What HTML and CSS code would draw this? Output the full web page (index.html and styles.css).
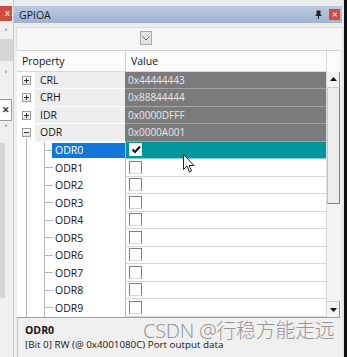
FILE: index.html
```html
<!DOCTYPE html>
<html lang="en">
<head>
    <meta charset="UTF-8">
    <meta name="viewport" content="width=device-width, initial-scale=1.0">
    <title>GPIOA</title>
    <link rel="stylesheet" href="styles.css">
</head>
<body>
    <div class="app">
        <!-- left docked strip -->
        <div class="strip">
            <div class="strip-close">x</div>
            <div class="strip-up">&#708;</div>
            <div class="strip-block"></div>
            <div class="strip-down">&#709;</div>
            <div class="strip-x">&#10005;</div>
            <div class="strip-up small">&#708;</div>
            <div class="strip-bar"></div>
        </div>

        <div class="panel">
            <div class="title-gap"></div>
            <div class="titlebar">
                <span class="title">GPIOA</span>
                <span class="title-btns">
                    <svg class="pin" width="7" height="9" viewBox="0 0 7 9"><path d="M1.5 0.5h4v4.5h1v1h-2.5v3h-1v-3h-2.5v-1h1z" fill="#222"/></svg>
                    <span class="close">&#10005;</span>
                </span>
            </div>

            <div class="toolbar">
                <div class="toolbar-box">
                    <span class="drop-btn">
                        <svg width="8" height="5" viewBox="0 0 8 5"><path d="M0.5 0.5l3.5 3.5 3.5-3.5" fill="none" stroke="#666" stroke-width="1"/></svg>
                    </span>
                </div>
            </div>

            <div class="grid">
                <div class="grid-main">
                    <div class="grid-head">
                        <div class="name">Property</div>
                        <div class="val">Value</div>
                    </div>

                    <div class="row top">
                        <div class="name"><span class="exp plus"></span><span class="lbl">CRL</span></div>
                        <div class="val">0x44444443</div>
                    </div>
                    <div class="row top">
                        <div class="name"><span class="exp plus"></span><span class="lbl">CRH</span></div>
                        <div class="val">0x88844444</div>
                    </div>
                    <div class="row top">
                        <div class="name"><span class="exp plus"></span><span class="lbl">IDR</span></div>
                        <div class="val">0x0000DFFF</div>
                    </div>
                    <div class="row top open">
                        <div class="name"><span class="exp"></span><span class="lbl">ODR</span></div>
                        <div class="val">0x0000A001</div>
                    </div>

                    <div class="row child selected">
                        <div class="name"><span class="lbl">ODR0</span></div>
                        <div class="val"><span class="chk on">
                            <svg width="10" height="9" viewBox="0 0 10 9"><path d="M1.5 4.5l2.5 2.5 5-5.5" fill="none" stroke="#111" stroke-width="2"/></svg>
                        </span></div>
                    </div>
                    <div class="row child"><div class="name"><span class="lbl">ODR1</span></div><div class="val"><span class="chk"></span></div></div>
                    <div class="row child"><div class="name"><span class="lbl">ODR2</span></div><div class="val"><span class="chk"></span></div></div>
                    <div class="row child"><div class="name"><span class="lbl">ODR3</span></div><div class="val"><span class="chk"></span></div></div>
                    <div class="row child"><div class="name"><span class="lbl">ODR4</span></div><div class="val"><span class="chk"></span></div></div>
                    <div class="row child"><div class="name"><span class="lbl">ODR5</span></div><div class="val"><span class="chk"></span></div></div>
                    <div class="row child"><div class="name"><span class="lbl">ODR6</span></div><div class="val"><span class="chk"></span></div></div>
                    <div class="row child"><div class="name"><span class="lbl">ODR7</span></div><div class="val"><span class="chk"></span></div></div>
                    <div class="row child"><div class="name"><span class="lbl">ODR8</span></div><div class="val"><span class="chk"></span></div></div>
                    <div class="row child"><div class="name"><span class="lbl">ODR9</span></div><div class="val"><span class="chk"></span></div></div>
                </div>

                <div class="scrollbar">
                    <div class="sb-head"></div>
                    <div class="sb-btn">
                        <svg width="7" height="4" viewBox="0 0 7 4"><path d="M0 4h7l-3.5-4z" fill="#111"/></svg>
                    </div>
                    <div class="sb-thumb"></div>
                    <div class="sb-track"></div>
                    <div class="sb-btn down">
                        <svg width="7" height="4" viewBox="0 0 7 4"><path d="M0 0h7l-3.5 4z" fill="#111"/></svg>
                    </div>
                </div>
            </div>

            <div class="desc">
                <div class="desc-title">ODR0</div>
                <div class="desc-text">[Bit 0] RW (@ 0x4001080C) Port output data</div>
                <div class="watermark">CSDN @行稳方能走远</div>
            </div>
        </div>

        <div class="edge"></div>
    </div>

    <!-- mouse pointer over the selected value -->
    <svg class="cursor" width="12" height="19" viewBox="0 0 12 19">
        <path d="M0.5 0.5v15l3.5-3.5 2.5 6 2-1-2.5-5.5h5z" fill="#fff" stroke="#222" stroke-width="1"/>
    </svg>
</body>
</html>
```

FILE: styles.css
```css
* {
    margin: 0;
    padding: 0;
    box-sizing: border-box;
}

body {
    width: 347px;
    height: 357px;
    overflow: hidden;
    background-color: #f0f0f0;
    font-family: 'Open Sans', 'Noto Sans', sans-serif;
    font-size: 10.5px;
    color: #141414;
    position: relative;
}

.app {
    display: flex;
    height: 357px;
}

/* left docked strip */
.strip {
    width: 14px;
    flex-shrink: 0;
    background-color: #f0f0f0;
    border-right: 1px solid #c9c9c9;
    display: flex;
    flex-direction: column;
    align-items: flex-start;
    padding-top: 6px;
    color: #333;
}

.strip-close {
    width: 12px;
    height: 15px;
    background-color: #cf4b3f;
    color: #f3c6c0;
    font-size: 9px;
    font-weight: bold;
    line-height: 14px;
    text-align: right;
    padding-right: 2px;
}

.strip-up,
.strip-down {
    height: 14px;
    width: 12px;
    font-size: 10px;
    line-height: 16px;
    text-align: center;
    margin-top: 4px;
}

.strip-block {
    width: 13px;
    height: 22px;
    background-color: #d5d5d5;
}

.strip-down {
    margin-top: 6px;
    margin-bottom: 18px;
}

.strip-x {
    width: 12px;
    height: 22px;
    background-color: #fff;
    border: 1px solid #9a9a9a;
    border-left: none;
    font-size: 9px;
    font-weight: bold;
    line-height: 20px;
    text-align: center;
}

.strip-up.small {
    margin-top: 0;
    height: 12px;
}

.strip-bar {
    width: 5px;
    height: 155px;
    margin-top: 10px;
    background-color: #d6d6d6;
}

/* main panel */
.panel {
    width: 328px;
    flex-shrink: 0;
    display: flex;
    flex-direction: column;
    position: relative;
}

.title-gap {
    height: 6px;
    background-color: #ececec;
}

.titlebar {
    height: 17px;
    display: flex;
    justify-content: space-between;
    align-items: center;
    padding: 0 2px 0 5px;
    background: linear-gradient(#b9cae0, #9fb4d0);
}

.title {
    font-size: 10.5px;
    color: #1a1a1a;
}

.title-btns {
    display: flex;
    align-items: center;
    gap: 7px;
}

.close {
    width: 11px;
    height: 11px;
    background-color: #cf4b3f;
    color: #f6d6d2;
    font-size: 7px;
    font-weight: bold;
    line-height: 11px;
    text-align: center;
}

.toolbar {
    height: 27px;
    padding: 4px 0 0 2px;
    background-color: #ececec;
}

.toolbar-box {
    height: 23px;
    background-color: #f6f6f6;
    border-top: 1px solid #dedede;
    border-left: 1px solid #dedede;
    padding: 3px 0 0 123px;
}

.drop-btn {
    display: flex;
    justify-content: center;
    align-items: center;
    width: 12px;
    height: 14px;
    background-color: #e3e3e3;
    border: 1px solid #a9a9a9;
}

/* property grid */
.grid {
    display: flex;
    margin-left: 3px;
    width: 323px;
    height: 268px;
    background-color: #fff;
    border-top: 1px solid #d2d2d2;
    border-bottom: 1px solid #a0a0a0;
    overflow: hidden;
}

.grid-main {
    width: 309px;
    display: flex;
    flex-direction: column;
    background:
        linear-gradient(#b5b5b5, #b5b5b5) 9px 87px / 1px 100% no-repeat,
        #fff;
}

.grid-head {
    display: flex;
    height: 20.5px;
    flex-shrink: 0;
    background-color: #fbfbfb;
    border-bottom: 1px solid #d8d8d8;
    align-items: center;
}

.grid-head .name {
    width: 108px;
    padding-left: 5px;
}

.grid-head .val {
    height: 100%;
    padding-left: 5px;
    display: flex;
    align-items: center;
    border-left: 1px solid #d0d0d0;
}

.row {
    display: flex;
    height: 17.5px;
    flex-shrink: 0;
}

.row .name {
    width: 108px;
    flex-shrink: 0;
    display: flex;
    align-items: center;
    position: relative;
}

.row .val {
    flex: 1;
    display: flex;
    align-items: center;
    padding-left: 3px;
}

.top .name {
    padding-left: 5px;
}

.top .lbl {
    height: 100%;
    flex: 1;
    display: flex;
    align-items: center;
    padding-left: 5px;
    margin-left: 4px;
    background-color: #eeeeee;
    border-bottom: 1px solid #fff;
}

.top .val {
    background-color: #7b7b7b;
    color: #e9e9e9;
    font-size: 10px;
    border-bottom: 1px solid #a4a4a4;
}

/* expand / collapse boxes */
.exp {
    width: 9px;
    height: 9px;
    border: 1px solid #9c9c9c;
    background: linear-gradient(#fff, #e2e2e2);
    position: relative;
}

.exp::before {
    content: "";
    position: absolute;
    left: 1px;
    top: 3px;
    width: 5px;
    height: 1px;
    background-color: #333;
}

.exp.plus::after {
    content: "";
    position: absolute;
    left: 3px;
    top: 1px;
    width: 1px;
    height: 5px;
    background-color: #333;
}

/* child rows with tree lines */
.child .name {
    background:
        linear-gradient(#b5b5b5, #b5b5b5) 27px 0 / 1px 100% no-repeat,
        linear-gradient(#b5b5b5, #b5b5b5) 27px 50% / 9px 1px no-repeat;
}

.child .lbl {
    margin-left: 35px;
    padding-left: 3px;
    height: 15.5px;
    flex: 1;
    display: flex;
    align-items: center;
}

.child .val {
    border-left: 1px solid #b8b8b8;
    border-bottom: 1px solid #d6d6d6;
}

.selected .lbl {
    background-color: #1277d9;
    color: #fff;
}

.selected .val {
    background-color: #00979c;
    border-bottom-color: #7fd0d3;
}

.chk {
    width: 13px;
    height: 13px;
    background-color: #fff;
    border: 1px solid #808080;
    border-bottom-color: #d8d8d8;
    display: flex;
    align-items: center;
    justify-content: center;
}

.chk.on {
    border-color: #fff;
}

/* scrollbar */
.scrollbar {
    width: 14px;
    display: flex;
    flex-direction: column;
    background-color: #f0f0f0;
    border-left: 1px solid #d8d8d8;
}

.sb-head {
    height: 20.5px;
    background-color: #fbfbfb;
}

.sb-btn {
    height: 16px;
    display: flex;
    justify-content: center;
    align-items: center;
    background-color: #f3f3f3;
    border-right: 1px solid #8e8e8e;
    border-bottom: 1px solid #cfcfcf;
}

.sb-btn.down {
    border-top: 1px solid #cfcfcf;
    border-bottom: none;
}

.sb-thumb {
    height: 116px;
    background-color: #ececec;
    border-left: 1px solid #c8c8c8;
    border-right: 1px solid #7e7e7e;
    border-bottom: 1px solid #7e7e7e;
}

.sb-track {
    flex: 1;
    background-color: #f4f4f4;
}

/* description */
.desc {
    flex: 1;
    margin-left: 3px;
    padding: 5px 0 0 7px;
    background-color: #f0f0f0;
    border-left: 1px solid #c9c9c9;
    position: relative;
}

.desc-title {
    font-weight: bold;
    font-size: 10.5px;
    line-height: 15px;
}

.desc-text {
    font-size: 9.8px;
    line-height: 14px;
    white-space: nowrap;
}

.watermark {
    position: absolute;
    left: 125px;
    top: 0;
    font-family: 'Noto Sans', 'Noto Sans CJK SC', sans-serif;
    font-size: 20px;
    line-height: 26px;
    font-weight: 300;
    color: rgba(110, 110, 110, 0.7);
    white-space: nowrap;
    letter-spacing: -0.3px;
}

.edge {
    flex: 1;
    background: linear-gradient(to right, #e4e4e4 2px, #111 2px);
}

.cursor {
    position: absolute;
    left: 183px;
    top: 154px;
}
```
